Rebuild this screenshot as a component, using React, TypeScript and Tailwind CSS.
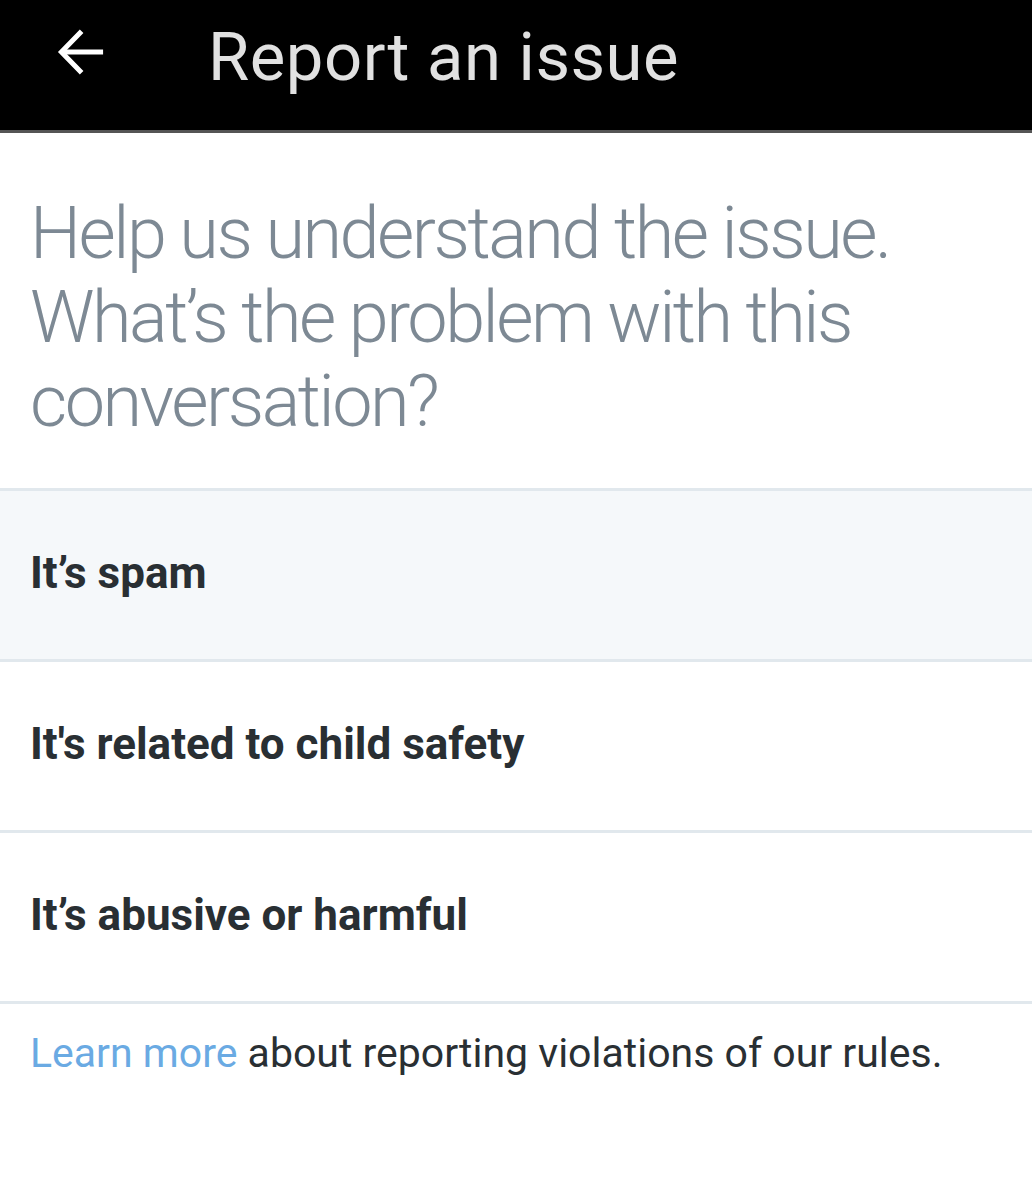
import React from "react";

const items = [
  { label: "It\u2019s spam", active: true },
  { label: "It's related to child safety", active: false },
  { label: "It\u2019s abusive or harmful", active: false },
];

export default function App() {
  return (
    <div className="w-[1032px] min-h-[1200px] bg-white" style={{ fontFamily: "Roboto, 'Noto Sans', sans-serif" }}>
      <header className="h-[133px] bg-black border-b-[3px] border-[#555555] flex items-start">
        <div className="w-[208px] pl-[56px] pt-[27px] flex items-start">
          <svg width="50" height="50" viewBox="0 0 24 24" fill="none" stroke="#ffffff" strokeWidth="2.4" strokeLinecap="butt" strokeLinejoin="miter">
            <path d="M22.6 12H2.6" />
            <path d="M12.3 2L2.6 12L12.3 22" />
          </svg>
        </div>
        <h1 className="pt-[24px] text-[67px] leading-none text-[#e1e1e1] font-normal tracking-[0.5px]">Report an issue</h1>
      </header>
      <div className="px-[30px] pt-[59px] pb-[44px]">
        <p className="text-[72px] leading-[84px] font-light text-[#7d8994] tracking-[-2.5px]">
          Help us understand the issue. What’s the problem with this conversation?
        </p>
      </div>
      <div className="border-t-[3px] border-[#e1e8ed]">
        {items.map((it) => (
          <div
            key={it.label}
            className={`h-[171px] flex items-center px-[30px] border-b-[3px] border-[#e1e8ed] ${it.active ? "bg-[#f5f8fa]" : "bg-white"}`}
          >
            <span className="text-[44px] font-bold text-[#292f33] -mt-[4px] tracking-[0px]">{it.label}</span>
          </div>
        ))}
      </div>
      <p className="px-[30px] pt-[19px] text-[41px] text-[#292f33]">
        <span className="text-[#6aaae3]">Learn more</span> about reporting violations of our rules.
      </p>
    </div>
  );
}
